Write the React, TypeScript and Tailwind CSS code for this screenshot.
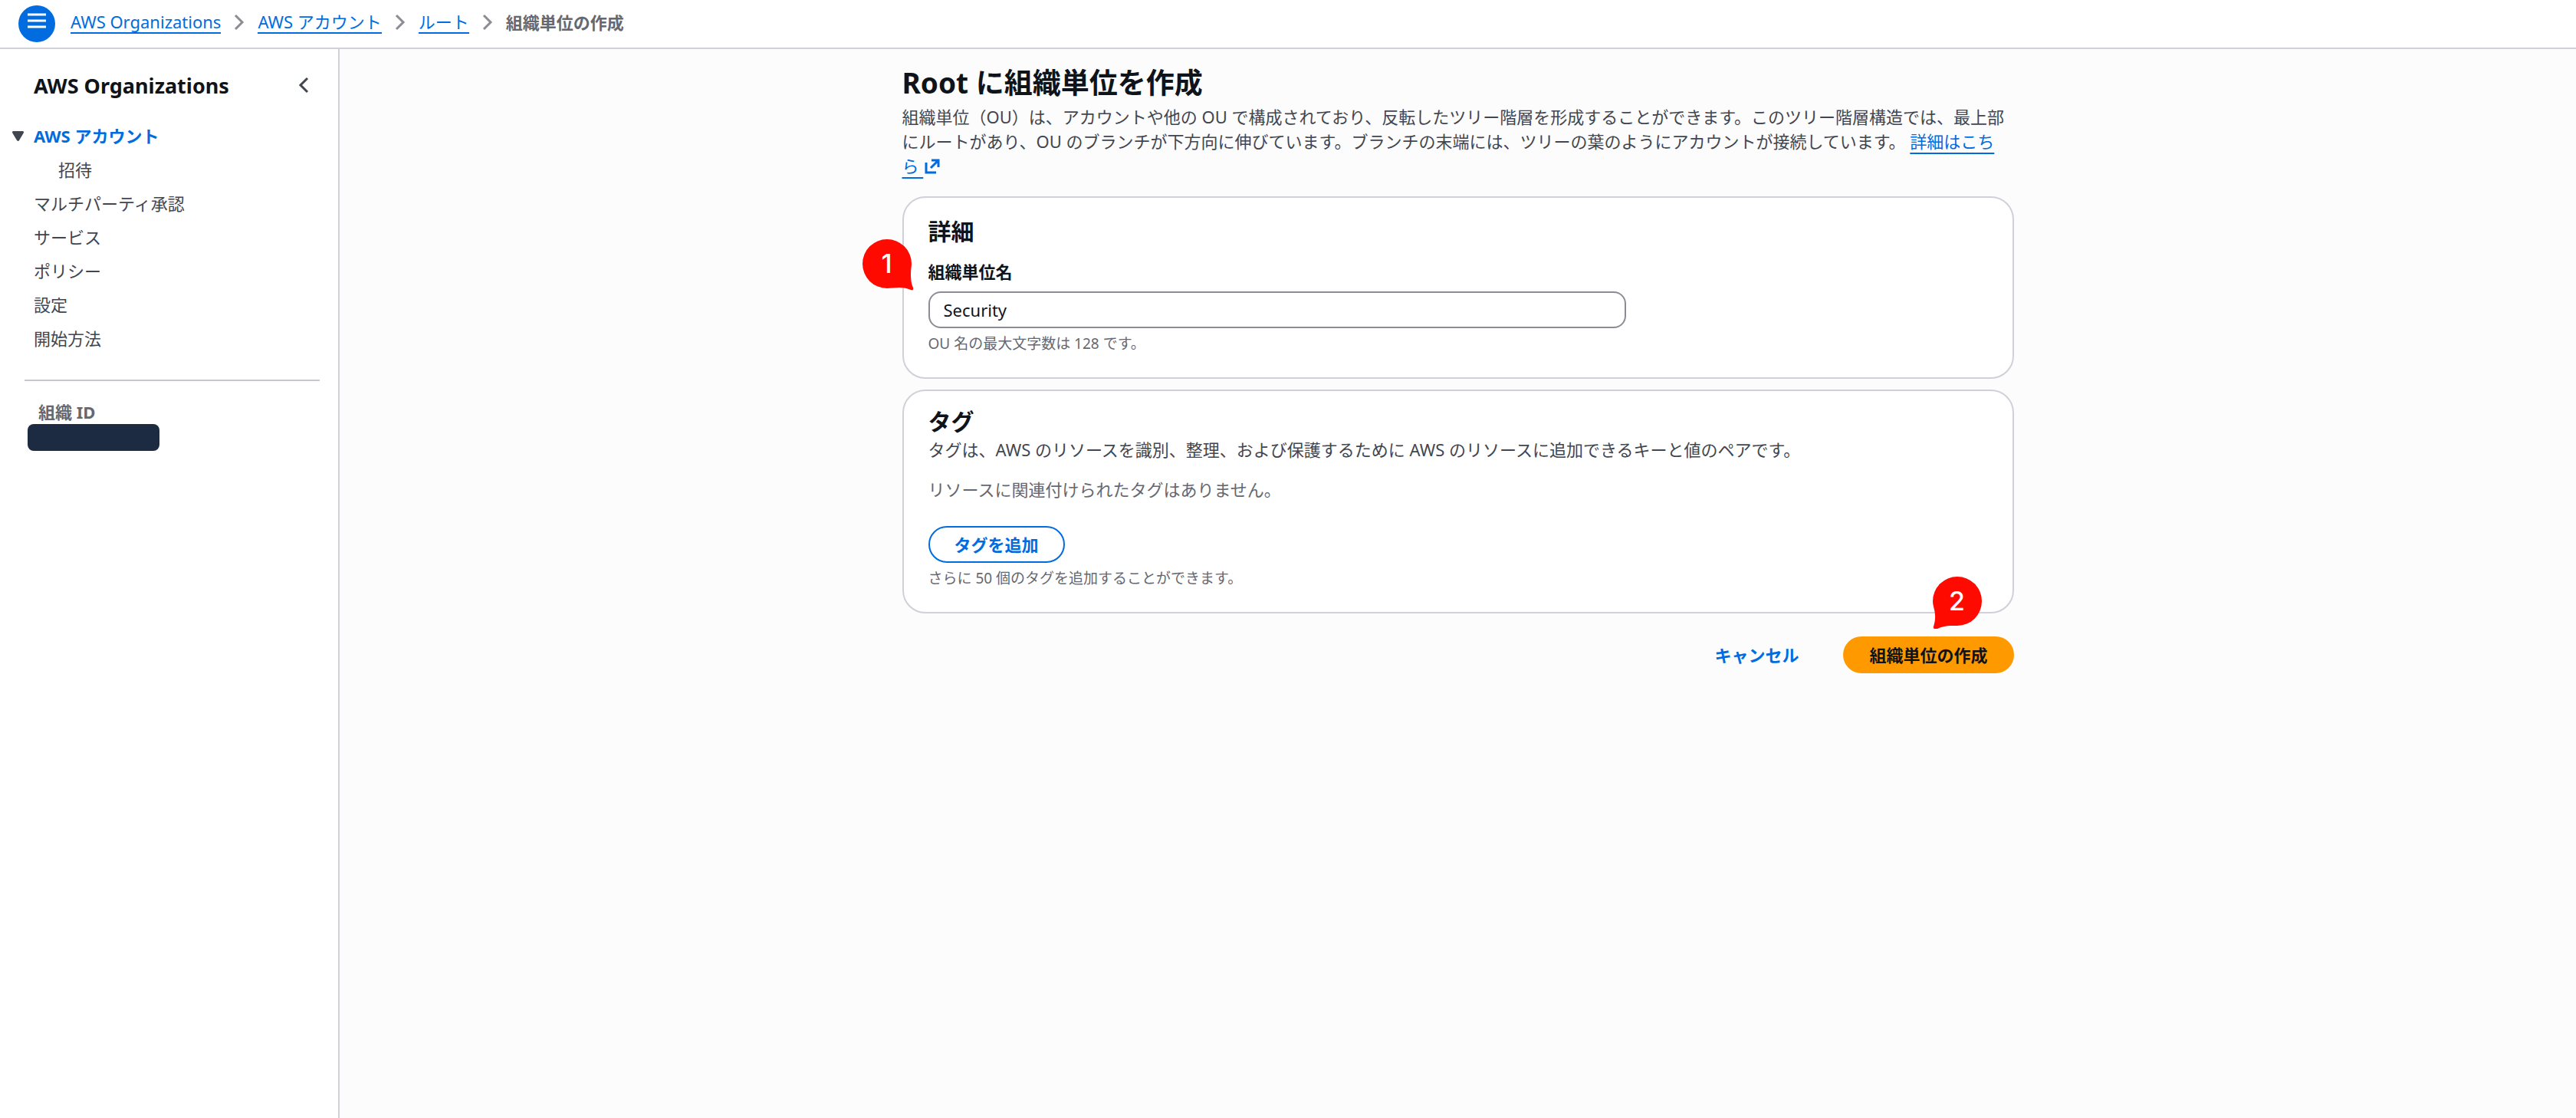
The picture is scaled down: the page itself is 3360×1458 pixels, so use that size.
import { useState } from 'react';
import type { ReactNode } from 'react';

type NavItem = { label: string; nested?: boolean };

const crumbs = ['AWS Organizations', 'AWS アカウント', 'ルート'];

const navItems: NavItem[] = [
  { label: '招待', nested: true },
  { label: 'マルチパーティ承認' },
  { label: 'サービス' },
  { label: 'ポリシー' },
  { label: '設定' },
  { label: '開始方法' },
];

function Chevron({ left = false, className }: { left?: boolean; className: string }) {
  return (
    <svg viewBox="0 0 14 22" className={`h-[22px] w-[14px] ${className}`} fill="none" stroke="currentColor" strokeWidth="3">
      <path d={left ? 'M12 2 3 11l9 9' : 'm2 2 9 9-9 9'} />
    </svg>
  );
}

function ExternalIcon() {
  return (
    <svg viewBox="0 0 20 20" className="ml-0.5 inline-block h-5 w-5 align-[-2px]" fill="none" stroke="currentColor" strokeWidth="3">
      <path d="M2 5v13h13M9 2h9v9M18 2 8 12" />
    </svg>
  );
}

// numbered speech bubble, the tail points to the bottom right unless flipped
function Marker({ n, flip = false, className }: { n: number; flip?: boolean; className: string }) {
  return (
    <span className={`absolute flex h-[64px] w-[64px] items-center justify-center ${className}`}>
      <svg viewBox="0 0 68 68" className="absolute top-0 left-0 h-[68px] w-[68px] text-[#ff0a00]" fill="currentColor">
        {flip ? (
          <path d="M32 0a32 32 0 1 1 0 64c-6 0-15-1-26 4-3 1-6 0-5-3 2-7 3-12 1-22-1-4-2-7-2-11A32 32 0 0 1 32 0Z" />
        ) : (
          <path d="M32 0a32 32 0 0 1 32 32c0 3-1 7-1 13 0 9 1 14 3 18 1 3-1 4-3 3-5-2-9-3-15-3-6 0-12 1-16 1A32 32 0 0 1 32 0Z" />
        )}
      </svg>
      <span className="relative font-[Inter] text-[34px] leading-none font-medium text-white">{n}</span>
    </span>
  );
}

function Card({ children }: { children: ReactNode }) {
  return <section className="relative rounded-[30px] border-2 border-[#d0d1d8] bg-white px-8">{children}</section>;
}

export default function App() {
  const [name, setName] = useState('Security');
  const [navOpen, setNavOpen] = useState(true);

  return (
    <div className="flex min-h-screen flex-col bg-[#fcfcfd] font-['Noto_Sans','Noto_Sans_CJK_JP',sans-serif] text-[22px] leading-8 text-[#424650]">
      <header className="flex h-[64px] items-center border-b-2 border-[#d0d1d8] bg-white px-6">
        <button
          type="button"
          aria-label="メニュー"
          onClick={() => setNavOpen(!navOpen)}
          className="flex h-12 w-12 justify-center rounded-full bg-[#006ce0] pt-2"
        >
          <svg viewBox="0 0 24 24" className="h-6 w-6" stroke="#fff" strokeWidth="3">
            <path d="M0 4h24M0 12h24M0 20h24" />
          </svg>
        </button>
        <nav className="mb-1 ml-5 flex items-center">
          {crumbs.map((c) => (
            <div key={c} className="flex items-center">
              <a href="#" className="border-b-2 border-[#006ce0] leading-7 text-[#006ce0]">{c}</a>
              <Chevron className="mx-[17px] text-[#8c8c94]" />
            </div>
          ))}
          <span className="leading-7 font-bold text-[#656871]">組織単位の作成</span>
        </nav>
      </header>

      <div className="flex flex-1">
        {navOpen && (
          <aside className="w-[443px] shrink-0 border-r-2 border-[#d0d1d8] bg-white">
            <div className="flex items-start justify-between pt-8 pr-[38px] pl-11">
              <h2 className="text-[27px] font-bold text-[#0f141a]">AWS Organizations</h2>
              <button type="button" aria-label="閉じる" className="pt-1" onClick={() => setNavOpen(false)}>
                <Chevron left className="text-[#424650]" />
              </button>
            </div>
            <ul className="mt-[27px] leading-[44px]">
              <li className="flex items-center pl-4">
                <svg viewBox="0 0 15 13" className="mr-[13px] h-[13px] w-[15px]" fill="#424650">
                  <path d="M1 0h13q1 0 1 2L9 12q-1 2-3 0L0 2Q0 0 1 0Z" />
                </svg>
                <a href="#" className="font-bold text-[#006ce0]">AWS アカウント</a>
              </li>
              {navItems.map((item) => (
                <li key={item.label} className={item.nested ? 'pl-[76px]' : 'pl-11'}>
                  <a href="#">{item.label}</a>
                </li>
              ))}
            </ul>
            <hr className="mt-8 mr-6 ml-8 border-t-2 border-[#c6c6cd]" />
            <p className="mt-6 pl-[50px] font-bold text-[#656871]">組織 ID</p>
            <div className="ml-9 h-[35px] w-[172px] rounded-lg bg-[#1c2a42]" />
          </aside>
        )}

        <main className="flex-1 pt-5">
          <div className="mx-auto max-w-[1450px]">
            <h1 className="text-[37px] leading-[48px] font-bold text-[#0f141a]">Root に組織単位を作成</h1>
            <p className="mt-1">
              組織単位（OU）は、アカウントや他の OU で構成されており、反転したツリー階層を形成することができます。このツリー階層構造では、最上部にルートがあり、OU のブランチが下方向に伸びています。ブランチの末端には、ツリーの葉のようにアカウントが接続しています。{' '}
              <a href="#" className="text-[#006ce0] underline decoration-2 underline-offset-[6px]">
                詳細はこち<span className="whitespace-nowrap">ら <ExternalIcon /></span>
              </a>
            </p>

            <form className="mt-6 flex flex-col gap-3.5" onSubmit={(e) => e.preventDefault()}>
              <Card>
                <Marker n={1} className="top-[54px] left-[-54px]" />
                <h2 className="pt-6 text-[30px] leading-10 font-bold text-[#0f141a]">詳細</h2>
                <label htmlFor="ou-name" className="mt-4 block font-bold text-[#0f141a]">組織単位名</label>
                <input
                  id="ou-name"
                  value={name}
                  onChange={(e) => setName(e.target.value)}
                  className="mt-2.5 block h-12 w-[910px] rounded-2xl border-2 border-[#8c8c94] bg-white px-[18px] text-[#0f141a] outline-none"
                />
                <p className="mt-1 mb-7 text-[19px] text-[#656871]">OU 名の最大文字数は 128 です。</p>
              </Card>

              <Card>
                <h2 className="pt-5 text-[30px] leading-10 font-bold text-[#0f141a]">タグ</h2>
                <p>タグは、AWS のリソースを識別、整理、および保護するために AWS のリソースに追加できるキーと値のペアです。</p>
                <p className="mt-5 text-[#656871]">リソースに関連付けられたタグはありません。</p>
                <button type="button" className="mt-8 block h-12 rounded-full border-2 border-[#006ce0] px-8 leading-7 font-bold text-[#006ce0]">
                  タグを追加
                </button>
                <p className="mt-1 mb-7 text-[19px] text-[#656871]">さらに 50 個のタグを追加することができます。</p>
                <Marker n={2} flip className="right-[40px] bottom-[-18px]" />
              </Card>

              <div className="mt-4 flex justify-end gap-6">
                <button type="button" className="h-12 px-[34px] font-bold text-[#006ce0]">キャンセル</button>
                <button type="submit" className="h-12 rounded-full bg-[#ff9900] px-[34px] font-bold text-[#0f141a]">組織単位の作成</button>
              </div>
            </form>
          </div>
        </main>
      </div>
    </div>
  );
}
